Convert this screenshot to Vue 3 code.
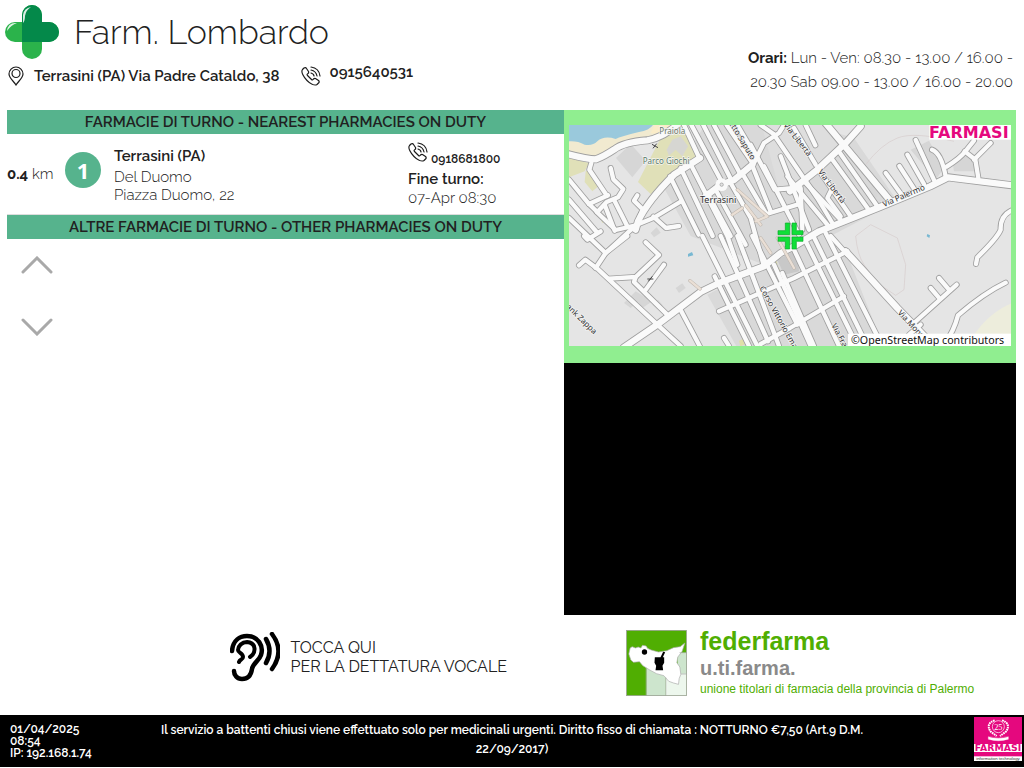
<script setup>
const places = [
  { distance: '0.4', city: 'Terrasini (PA)', name: 'Del Duomo', address: 'Piazza Duomo, 22', phone: '0918681800', end: '07-Apr 08:30' },
]

const minorRoads = [
  'M15 215 L75 288 L100 312', 'M75 288 L132 262', 'M140 180 L148 214 L178 243 L162 268 L128 282 L100 312',
  'M15 275 L98 372', 'M15 330 L125 435', 'M150 275 L190 355', 'M122 290 L152 368', 'M82 165 L76 185 L128 262',
  'M220 262 L210 278 L236 304 L220 345', 'M98 312 L155 366 L215 352 L268 330 L348 282', 'M268 326 L306 360 L345 354',
  'M215 352 L125 435 L95 480', 'M190 384 L125 435', 'M60 384 L70 395 L110 370', 'M45 472 L64 455 L100 482 L280 650 L350 714',
  'M135 512 L215 507 L285 441 L245 403', 'M215 507 L210 522 L312 622', 'M300 470 L245 545', 'M350 606 L410 720',
  'M318 205 L404 380', 'M350 180 L446 384', 'M378 165 L490 384 L520 470', 'M360 51 L406 150', 'M382 51 L470 215', 'M418 51 L500 212',
  'M450 51 L530 200', 'M488 51 L566 166', 'M520 51 L578 150', 'M430 255 L500 384', 'M455 245 L545 410', 'M415 384 L580 714',
  'M470 384 L612 700', 'M520 384 L645 714', 'M565 384 L700 650', 'M452 505 L555 714', 'M465 610 L555 570 L690 510 L850 430', 'M480 690 L495 714',
  'M590 708 L678 660 L840 565', 'M500 225 L560 330 L600 475', 'M540 205 L608 320', 'M566 176 L620 310', 'M600 175 L705 380', 'M560 110 L632 245 L690 240',
  'M608 318 L700 290', 'M570 165 L600 105 L645 75 L660 51', 'M590 51 L632 80', 'M630 80 L760 270 L805 345', 'M650 145 L735 365',
  'M670 205 L790 350', 'M710 240 L715 365', 'M720 220 L830 335', 'M760 180 L860 325', 'M800 148 L912 302', 'M828 135 L940 295',
  'M690 60 L755 170', 'M725 51 L754 112', 'M800 250 L790 270 L830 325', 'M965 195 L1014 262', 'M1006 174 L1050 242', 'M1030 140 L1080 228',
  'M1055 96 L1112 220', 'M1104 125 Q1132 135 1145 205', 'M1148 176 Q1190 150 1204 130 L1230 98', 'M1202 130 L1234 155 L1243 210', 'M1230 155 L1280 105',
  'M630 470 L740 714', 'M655 495 L700 600 L750 714', 'M690 425 L825 714', 'M725 400 L880 714', 'M750 388 L910 714', 'M785 375 L955 714', 'M800 384 L850 440',
  'M1050 645 L1178 530', 'M1124 568 L1100 540', 'M1155 545 L1125 510', 'M1140 710 Q1170 670 1182 622 Q1260 555 1325 524',
  'M1341 308 Q1308 325 1310 365 Q1300 390 1240 448 L1236 468', 'M1035 680 L1070 650',
]
const mainRoads = [
  'M10 138 Q70 154 96 154 Q120 145 150 125 Q180 102 250 97 Q300 88 344 46',
  'M215 365 L222 340 Q250 280 330 200 L408 150',
  'M180 718 L280 650 L410 552 L465 525 L600 475 L650 435 L690 415 L765 370 L948 297 L1098 235 L1152 208 L1345 232',
  'M425 265 L470 230 L510 216 L565 170',
  'M678 250 L760 185 L848 102 L890 55',
  'M785 46 L980 280',
  'M845 430 L1000 600 L1110 714',
]
const buildings = [
  'M156 150 L200 108 L245 158 L205 208 Z', 'M180 585 L215 550 L240 565 L200 600 Z', 'M220 580 L245 560 L265 580 L235 600 Z', 'M335 540 L355 526 L365 540 L345 555 Z',
  'M360 575 L380 560 L392 574 L370 594 Z', 'M265 590 L282 575 L296 592 L280 603 Z', 'M260 375 L278 358 L290 374 L270 388 Z', 'M905 245 L930 232 L942 265 L920 278 Z',
  'M1040 125 L1095 98 L1140 180 L1115 215 Z', 'M1165 160 L1215 140 L1240 190 L1170 190 Z',
]
</script>

<template>
  <div class="page">
    <header class="top">
      <div class="identity">
        <div class="brand">
          <svg class="cross" viewBox="0 0 54 54" aria-hidden="true">
            <rect x="17" y="0" width="20" height="54" rx="10" fill="#2bb34b" />
            <rect x="0" y="17" width="54" height="20" rx="10" fill="#2bb34b" />
            <path d="M17 37V10a10 10 0 0 1 20 0v7h7a10 10 0 0 1 0 20z" fill="#04894a" />
            <path d="M18 18V10Q19 3 26 2Q21 5 20 11Q20 16 18 18zM2 26Q3 17 12 18Q6 20 2 26z" fill="#fff" opacity=".85" />
          </svg>
          <h1>Farm. Lombardo</h1>
        </div>
        <div class="contact">
          <svg class="pin" viewBox="0 0 16 20" fill="none" stroke="#1c1c1c" stroke-width="1.2" aria-hidden="true">
            <path d="M8 19C6 15.500 1 12 1 8a7 7 0 0 1 14 0c0 4-5 7.500-7 11z" />
            <circle cx="8" cy="7.500" r="4" />
          </svg>
          <strong class="street">Terrasini (PA) Via Padre Cataldo, 38</strong>
          <svg class="phone" viewBox="0 0 20 20" fill="none" stroke="#1c1c1c" stroke-width="1.200" stroke-linecap="round" stroke-linejoin="round" aria-hidden="true">
            <path d="M3 2L1.500 3.500C-.5 6 3 11.500 6 14.500S13.500 20 16 18.500L18 16.500Q18.500 15.500 17.500 14.500L14.500 12.500Q13.500 12 12.500 13Q11.500 14.500 10.500 13.500L6.500 9.500Q5.500 8.500 7 7.500Q8 6.500 7.500 5.500L5.500 2.500Q4.500 1 3 2z" />
            <path d="M10 1Q18 2 19 10M10 4Q15 5 16 10M10 7Q13 8 13 10" />
          </svg>
          <strong class="number">0915640531</strong>
        </div>
      </div>
      <p class="hours"><b>Orari:</b> Lun - Ven: 08.30 - 13.00 / 16.00 -<br>20.30 Sab 09.00 - 13.00 / 16.00 - 20.00</p>
    </header>

    <main class="board">
      <section class="list">
        <h2>FARMACIE DI TURNO - NEAREST PHARMACIES ON DUTY</h2>
        <article v-for="(p, i) in places" :key="p.name" class="entry">
          <div class="distance"><b>{{ p.distance }}</b> km</div>
          <div class="rank">{{ i + 1 }}</div>
          <div class="where">
            <h3>{{ p.city }}</h3>
            <p>{{ p.name }}</p>
            <p>{{ p.address }}</p>
          </div>
          <div class="shift">
            <div class="call">
              <svg class="phone" viewBox="0 0 20 20" fill="none" stroke="#1c1c1c" stroke-width="1.200" stroke-linecap="round" stroke-linejoin="round" aria-hidden="true">
                <path d="M3 2L1.500 3.500C-.5 6 3 11.500 6 14.500S13.500 20 16 18.500L18 16.500Q18.500 15.500 17.500 14.500L14.500 12.500Q13.500 12 12.500 13Q11.500 14.500 10.500 13.500L6.500 9.500Q5.500 8.500 7 7.500Q8 6.500 7.500 5.500L5.500 2.500Q4.500 1 3 2z" />
                <path d="M10 1Q18 2 19 10M10 4Q15 5 16 10M10 7Q13 8 13 10" />
              </svg>
              <strong>{{ p.phone }}</strong>
            </div>
            <h3>Fine turno:</h3>
            <p>{{ p.end }}</p>
          </div>
        </article>
        <h2>ALTRE FARMACIE DI TURNO - OTHER PHARMACIES ON DUTY</h2>
        <div class="scrollers">
          <button type="button" aria-label="Scorri su"><svg viewBox="0 0 32 18"><path d="M2 16L16 2l14 14" /></svg></button>
          <button type="button" aria-label="Scorri giù"><svg viewBox="0 0 32 18"><path d="M2 2l14 14L30 2" /></svg></button>
        </div>
      </section>

      <aside class="side">
        <div class="mapbox">
          <svg class="map" viewBox="15 51 1326 663" preserveAspectRatio="xMidYMid slice" role="img" aria-label="Mappa di Terrasini">
            <rect x="0" y="40" width="1360" height="690" fill="#e5e5e5" />
            <path d="M300 240L430 40H700L870 90L1000 280L800 384L850 440L960 720H520L430 560L600 470L380 384z" fill="#d9d9d9" />
            <path d="M590 40H780L835 115L740 190L650 260z" fill="#dedede" />
            <path d="M0 40H330L255 105Q190 90 140 122L80 160L0 130z" fill="#f1ead0" />
            <path d="M0 40H272Q265 66 225 72Q170 85 155 93Q120 82 100 100Q85 115 62 110Q40 98 15 100H0z" fill="#9ac9dc" />
            <path d="M260 75Q300 85 335 40L275 45z" fill="#faecc8" />
            <path d="M15 150L75 165L62 190L15 208zM65 190L85 182L103 235L85 250L62 222zM222 222L290 90L365 70L400 140L330 200L260 258zM105 322L114 315L126 338L115 345z" fill="#e0e0b8" />
            <path d="M325 95L350 85L372 115L355 145L335 125L315 143L308 125z" fill="#d6d6d2" />
            <path d="M1210 714Q1260 620 1345 585V714z" fill="#ededdc" />
            <path v-for="(d, i) in buildings" :key="i" :d="d" fill="#d6d6d6" />
            <path d="M875 384Q880 440 900 470L940 525L995 562L1020 545L1025 470L1000 390L920 350L875 384M905 170Q950 110 1000 90T1170 100" fill="none" stroke="#d6cccb" stroke-width="2" />
            <path d="M640 455L700 425L705 490L660 500z" fill="#c8c8c8" />
            <path d="M622 456l14-4 5 18-14 5zM632 482l12-4 7 16-14 6zM525 698l12-5 6 16-14 6z" fill="#dfdfa9" />
            <path d="M372 438l12-6 4 10-16 4zM1090 378l8 4-2 8-8-5z" fill="#78b8d2" />
            <g fill="none" stroke-linejoin="round" stroke-linecap="round">
              <g stroke="#9f9f9f" stroke-width="18"><path v-for="d in minorRoads" :key="d" :d="d" /></g>
              <g stroke="#9f9f9f" stroke-width="24"><path v-for="d in mainRoads" :key="d" :d="d" /></g>
              <g stroke="#fafafa" stroke-width="13"><path v-for="d in minorRoads" :key="d" :d="d" /></g>
              <g stroke="#fafafa" stroke-width="19"><path v-for="d in mainRoads" :key="d" :d="d" /></g>
              <path d="M378 518L408 543M520 245L610 325L575 340M545 292L590 350M535 300L505 320M590 390L620 435M640 390L690 480" stroke="#bdb5ad" stroke-width="10" />
              <path d="M378 518L408 543M520 245L610 325L575 340M545 292L590 350M535 300L505 320M590 390L620 435M640 390L690 480" stroke="#eadfd5" stroke-width="7" />
            </g>
            <circle cx="473" cy="230" r="19" fill="#fafafa" />
            <circle cx="473" cy="230" r="5" fill="#e2e2e2" stroke="#999" stroke-width="2" />
            <g class="label" fill="#303030">
              <text x="286" y="78" fill="#6b7866">Praiola</text>
              <text x="236" y="168" fill="#5a7a68">Parco Giochi</text>
              <text class="town" x="408" y="285">Terrasini</text>
              <text transform="translate(494 45) rotate(59)">etto Saputo</text>
              <text transform="translate(658 52) rotate(52)">Via Libertà</text>
              <text transform="translate(761 192) rotate(53)">Via Libertà</text>
              <text transform="translate(960 297) rotate(-23)">Via Palermo</text>
              <text transform="translate(5 598) rotate(44)">ank Zappa</text>
              <text transform="translate(586 540) rotate(61)">Corso Vittorio Emanuele</text>
              <text transform="translate(802 652) rotate(62)">Via Francesco</text>
              <text transform="translate(1000 616) rotate(47)">Via Monsignore</text>
            </g>
            <path d="M264 109L282 119M267 121L278 107M250 513h18M253 520l12-15" stroke="#444" stroke-width="3" />
            <g fill="#10df38" stroke="#07ab27" stroke-width="2">
              <path d="M664 345h13v35h-35v-12h22zM684 345h13v23h20v12h-33zM642 387h35v36h-13v-23h-22zM684 387h33v13h-20v23h-13z" />
            </g>
            <rect x="1096" y="51" width="245" height="44" fill="#fff" />
            <text class="stamp" x="1095" y="91">FARMASI</text>
            <rect x="852" y="677" width="489" height="37" fill="#fff" />
            <text class="credit" x="861" y="707">©OpenStreetMap contributors</text>
          </svg>
        </div>
        <div class="video"></div>
      </aside>
    </main>

    <section class="services">
      <button type="button" class="voice">
        <svg viewBox="0 0 50 50" fill="none" stroke="#000" stroke-width="4.500" stroke-linecap="round" aria-hidden="true">
          <path d="M2 19C3 8 10 4 17 4c11 0 17 10 14 19-2 6-8 8-9 14-1 7-5 10-10 10-5 0-8-4-8-8" />
          <path d="M20 25c6-4 7-14-3-15-5 0-9 4-9 8 0 3 5 3 5 7 0 3-3 2-4 5" stroke-width="4" />
          <path d="M36 7q7 12 0 24M42 2q13 17 0 35" />
        </svg>
        <span>TOCCA QUI<br>PER LA DETTATURA VOCALE</span>
      </button>
      <div class="feder">
        <svg viewBox="48 44 182 198" aria-hidden="true">
          <rect x="49" y="45" width="180" height="196" fill="#50ae02" />
          <path d="M109 155h58v86h-58zM202 112h27v65h-27z" fill="#cde5cd" />
          <path d="M167 175h62v66h-62z" fill="#edf7ed" />
          <path d="M56 116L60 98L66 94L76 98L84 95L92 98L97 90L108 92L112 99L123 104L145 110L170 106L190 97L210 94L224 83L216 108L203 125L200 142L209 155L212 177L207 190L205 207L190 203L176 198L161 181L139 175L117 163L98 151L88 139L70 141L62 134z" fill="#fff" stroke="#aaa" stroke-width="2" />
          <circle cx="103" cy="110" r="8" />
          <path d="M134 126h17l8-17 6 2-7 15h4v16l-5 9 2 14h-23l2-14-5-9z" />
          <path d="M108 157v84M167 187v54M212 176h17M208 112h21" stroke="#aaa" stroke-width="2" />
          <rect x="49" y="45" width="180" height="196" fill="none" stroke="#999" stroke-width="2" />
        </svg>
        <div class="federtext">
          <strong>federfarma</strong>
          <b>u.ti.farma.</b>
          <span>unione titolari di farmacia della provincia di Palermo</span>
        </div>
      </div>
    </section>

    <footer class="bottom">
      <div class="status"><div>01/04/2025</div><div>08:54</div><div>IP: 192.168.1.74</div></div>
      <p>Il servizio a battenti chiusi viene effettuato solo per medicinali urgenti. Diritto fisso di chiamata : NOTTURNO €7,50 (Art.9 D.M. 22/09/2017)</p>
      <svg class="badge" viewBox="0 0 144 132" role="img" aria-label="Farmasi information technology">
        <rect width="144" height="132" fill="#e5087e" />
        <g fill="none" stroke="#fff">
          <circle cx="73" cy="29" r="18" stroke-width="2" />
          <path d="M62 10Q34 20 50 44L68 57M84 10Q112 20 96 44L78 57" stroke-width="6" stroke-dasharray="5 2" />
          <path d="M43 59Q73 68 103 59V67Q73 76 43 67z" fill="#fff" />
        </g>
        <text x="73" y="39" text-anchor="middle" class="years">25</text>
        <rect y="81" width="144" height="24" fill="#fff" />
        <text x="72" y="103" text-anchor="middle" class="firm">FARMASI</text>
        <rect y="118" width="144" height="14" fill="#fff" />
        <text x="72" y="129" text-anchor="middle" class="tag">information technology</text>
      </svg>
    </footer>
  </div>
</template>

<style>
body { margin: 0; background: #fff; }
</style>

<style scoped>
* { box-sizing: border-box; }
h1, h2, h3, p { margin: 0; }
button { padding: 0; border: 0; background: none; font: inherit; color: inherit; cursor: pointer; }
svg { display: block; }
strong { font-weight: 600; }
.page { min-height: 100vh; display: flex; flex-direction: column; font-family: Raleway, Lato, sans-serif; font-size: 15px; color: #212121; padding-bottom: 1px; }
.top { display: flex; justify-content: space-between; height: 110px; padding: 5px 11px 0 5px; }
.brand { display: flex; align-items: center; gap: 15px; }
.cross { width: 54px; height: 54px; }
h1 { font-size: 34px; line-height: 54px; font-weight: 300; }
.contact { display: flex; align-items: flex-start; padding: 7px 0 0 3px; }
.pin { width: 16px; height: 20px; }
.street { margin: 0 22px 0 10px; line-height: 20px; }
.phone { width: 20px; height: 20px; }
.number { margin-left: 8px; line-height: 12px; }
.hours { padding-top: 41px; text-align: right; line-height: 24px; font-weight: 300; }
.hours b { font-weight: 700; }
.board { display: grid; grid-template-columns: 557fr 452fr; padding: 0 8px 0 7px; flex: 1; }
h2 { height: 24px; background: #56b38d; text-align: center; font-size: 15px; line-height: 24px; font-weight: 600; white-space: nowrap; }
.entry { display: grid; grid-template-columns: 58px 49px 1fr 156px; height: 81px; border-bottom: 1px solid #ddd; }
.distance { padding-top: 30px; line-height: 20px; font-weight: 300; }
.distance b { font-weight: 700; }
.rank { width: 36px; height: 36px; margin-top: 18px; border-radius: 50%; background: #56b38d; color: #fff; text-align: center; font-family: "Open Sans", sans-serif; font-size: 22px; line-height: 36px; font-weight: 700; }
.where { padding-top: 12px; }
h3 { font-size: 15px; line-height: 20px; font-weight: 600; }
.entry p { line-height: 18px; font-weight: 300; }
.where h3 { margin-bottom: 2px; }
.shift { padding-top: 8px; }
.call { display: flex; align-items: flex-end; gap: 3px; height: 27px; }
.call .phone { align-self: flex-start; }
.call strong { font-size: 12px; line-height: 20px; }
.scrollers { display: flex; flex-direction: column; align-items: flex-start; gap: 44px; padding: 17px 0 0 14px; }
.scrollers svg { width: 32px; height: 18px; fill: none; stroke: #a9a9a9; stroke-width: 3; stroke-linecap: round; }
.side { display: grid; grid-template-rows: 253px 1fr; }
.mapbox { background: #90ee90; padding: 15px 5px 17px; }
.map { width: 100%; height: 221px; }
.video { background: #000; min-height: 252px; }
.label text { font-family: "Noto Sans", sans-serif; font-size: 24px; paint-order: stroke; stroke: #f5f5f5; stroke-width: 4px; }
.label .town { font-size: 27px; }
.stamp { font: bold 48px "DejaVu Sans", sans-serif; fill: #e5087e; }
.credit { font: 32px "Noto Sans", sans-serif; fill: #111; }
.services { display: grid; grid-template-columns: 626fr 398fr; height: 100px; }
.voice { display: flex; align-items: center; align-self: start; justify-self: end; gap: 10px; margin: 17px 119px 0 0; text-align: left; font-size: 16px; line-height: 19px; }
.voice svg { width: 50px; height: 50px; }
.feder { display: flex; gap: 13px; padding-top: 15px; }
.feder svg { width: 61px; height: 66px; }
.federtext { display: flex; flex-direction: column; font-family: "Liberation Sans", sans-serif; color: #50ae02; white-space: nowrap; }
.federtext strong { font-size: 25px; line-height: 23px; font-weight: 700; }
.federtext b { font-size: 20px; line-height: 30px; color: #8a8a8a; }
.federtext span { font-size: 12px; line-height: 12px; }
.bottom { display: grid; grid-template-columns: 140px 1fr 140px; height: 52px; background: #000; color: #fff; font-size: 12px; font-weight: 600; }
.status { padding: 8px 0 0 10px; line-height: 12px; }
.bottom p { padding-top: 6px; text-align: center; line-height: 19px; }
.badge { width: 48px; height: 44px; justify-self: end; margin: 2px 2px 0 0; }
.years { font: 25px "Liberation Serif", serif; fill: #fff; }
.firm { font: bold 28px "DejaVu Sans", sans-serif; fill: #e5087e; }
.tag { font: 13px "Liberation Sans", sans-serif; fill: #333; }
</style>
